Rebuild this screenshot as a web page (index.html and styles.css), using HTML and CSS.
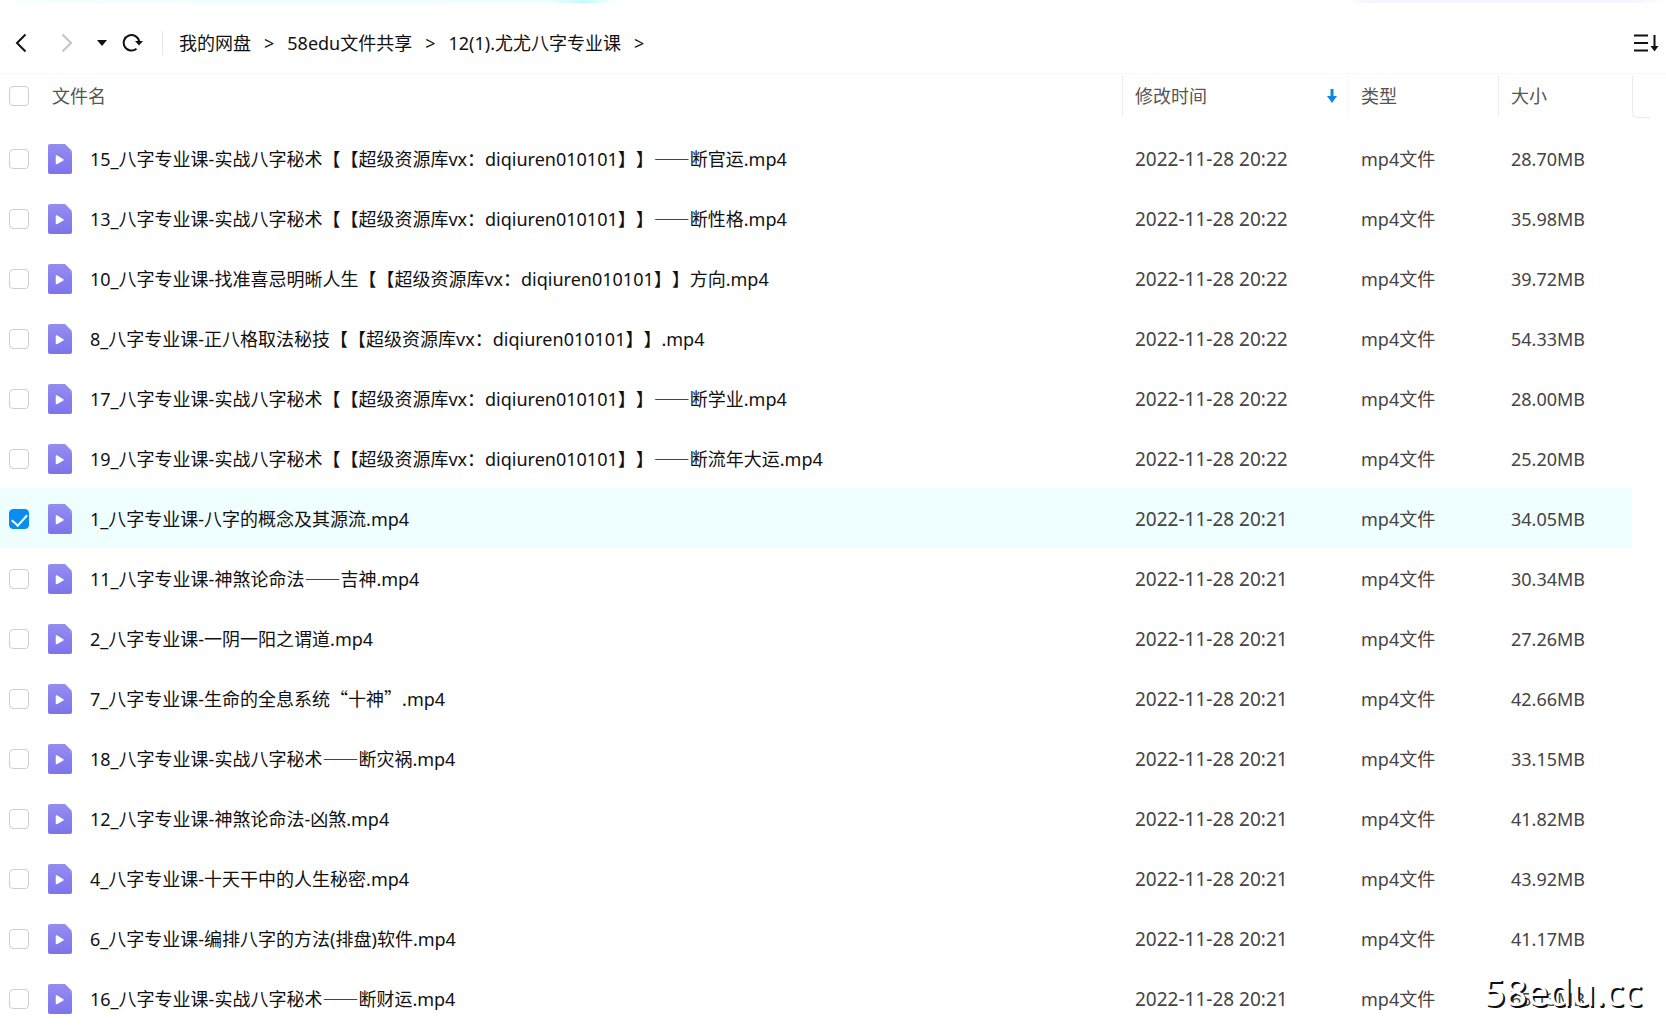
FILE: index.html
```html
<!DOCTYPE html>
<html lang="zh-CN">
<head>
<meta charset="utf-8">
<title>我的网盘</title>
<link rel="stylesheet" href="styles.css">
</head>
<body>
<svg class="defs" width="0" height="0" aria-hidden="true">
  <defs>
    <linearGradient id="fileFill" x1="0" y1="0" x2="0" y2="1">
      <stop offset="0" stop-color="#958cf0"/>
      <stop offset="1" stop-color="#7c74ec"/>
    </linearGradient>
    <symbol id="video" viewBox="0 0 24 30">
      <path d="M2 0H17L24 7V28a2 2 0 0 1-2 2H2a2 2 0 0 1-2-2V2a2 2 0 0 1 2-2z" fill="url(#fileFill)"/>
      <path d="M17 0L24 7V10Q22 4 17 0z" fill="#b9b1f8"/>
      <path d="M8.500 12V19.500L15 15.800z" fill="#fff" stroke="#fff" stroke-width="1.500" stroke-linejoin="round"/>
    </symbol>
  </defs>
</svg>
<div class="strip"></div>
<header class="toolbar">
  <button class="tool back" aria-label="后退"><svg width="12" height="20" viewBox="0 0 12 20"><path d="M10.500 1.500L2 10l8.500 8.500" fill="none" stroke="#111" stroke-width="2"/></svg></button>
  <button class="tool forward" aria-label="前进" disabled><svg width="12" height="20" viewBox="0 0 12 20"><path d="M1.500 1.500L10 10l-8.500 8.500" fill="none" stroke="#c4c4c4" stroke-width="2"/></svg></button>
  <button class="tool recent" aria-label="历史"><svg width="10" height="6" viewBox="0 0 10 6"><path d="M0 0H10L5 6z" fill="#111"/></svg></button>
  <button class="tool" aria-label="刷新"><svg width="22" height="20" viewBox="0 0 22 20"><path d="M14.500 15.800A7.800 7.800 0 1 1 17.200 8.500" fill="none" stroke="#111" stroke-width="2"/><path d="M13 8H21L17 12.500z" fill="#111"/></svg></button>
  <nav class="crumbs" aria-label="路径">
    <a href="#">我的网盘</a><span>&gt;</span><a href="#">58edu文件共享</a><span>&gt;</span><a href="#">12(1).尤尤八字专业课</a><span>&gt;</span>
  </nav>
  <button class="tool sort" aria-label="排序"><svg width="26" height="20" viewBox="0 0 26 20"><path d="M1 2.500H15M1 10H15M1 17.500H15M21.500 2V16" fill="none" stroke="#111" stroke-width="2"/><path d="M17.500 13H25.500L21.500 18.500z" fill="#111"/></svg></button>
</header>
<main>
<table class="files">
  <colgroup><col class="c-check"><col><col class="c-date"><col class="c-type"><col class="c-size"><col class="c-end"></colgroup>
  <thead>
    <tr>
      <th><div class="head"><input type="checkbox" aria-label="全选"></div></th>
      <th><div class="head name">文件名</div></th>
      <th><div class="head line">修改时间<svg class="arrow" width="12" height="16" viewBox="0 0 12 16"><path d="M6 1V10" stroke="#0b86e8" stroke-width="3"/><path d="M1 8H11L6 15z" fill="#0b86e8"/></svg></div></th>
      <th><div class="head line faint">类型</div></th>
      <th><div class="head line">大小</div></th>
      <th><div class="head end"></div></th>
    </tr>
  </thead>
  <tbody id="rows"></tbody>
</table>
</main>
<div class="mark">58edu.cc</div>
<script src="files.js"></script>
</body>
</html>
```
FILE: styles.css
```css
* { box-sizing: border-box; }
body {
  margin: 0;
  background: #fff;
  color: #111;
  font: 18px/24px "Noto Sans", "Noto Sans CJK SC", sans-serif;
  text-spacing-trim: space-all;
}
.defs { position: absolute; }
.strip {
  height: 3px;
  background: linear-gradient(90deg, #fff, #f3fefe 2%, #effefe 33%, #c4fafa 35%, #fcfffc 37%, #fdfffc 81%, #f5f5fb 82%, #f5f5fb 98%, #fff);
}
.toolbar {
  display: flex;
  align-items: center;
  height: 71px;
  padding: 10px 7px 0 15px;
  border-bottom: 1px solid #f8f8f8;
}
.tool { display: flex; padding: 0; border: 0; background: none; }
.forward { margin-left: 34px; }
.recent { margin-left: 24px; }
.recent + .tool { margin-left: 15px; }
.crumbs {
  display: flex;
  align-items: center;
  gap: 13px;
  margin-left: 18px;
  padding-left: 16px;
  border-left: 1px solid #e6e6e6;
}
.crumbs a { color: inherit; text-decoration: none; }
.sort { margin-left: auto; }
.files { width: 100%; table-layout: fixed; border-collapse: collapse; }
.c-check { width: 48px; }
.c-date { width: 226px; }
.c-type { width: 150px; }
.c-size { width: 134px; }
.c-end { width: 34px; }
th { height: 54px; padding: 2px 0 0; vertical-align: top; font-weight: 400; text-align: left; color: #555; }
.head { display: flex; align-items: center; height: 40px; }
.head input, td input { margin: 0 0 0 9px; }
.name { padding-left: 4px; }
.line { padding-left: 12px; border-left: 1px solid #ebebeb; }
.faint { border-left-color: #f8f8f8; }
.arrow { margin: 0 10px 0 auto; }
.end { height: 42px; width: 18px; border: solid #ebebeb; border-width: 0 0 1px 1px; border-radius: 0 0 0 5px; }
input[type="checkbox"] {
  display: block;
  width: 20px;
  height: 20px;
  appearance: none;
  border: 1px solid #cfcfcf;
  border-radius: 4px;
  background: #fff;
}
input[type="checkbox"]:checked {
  border-color: #0a8cf0;
  background: #0a8cf0;
}
input[type="checkbox"]:checked::after {
  content: "";
  display: block;
  width: 7px;
  height: 13px;
  margin: 1px 0 0 5px;
  border: solid #fff;
  border-width: 0 2px 2px 0;
  transform: rotate(42deg);
}
td { height: 60px; padding: 2px 0 0 13px; color: #444; white-space: nowrap; }
td:first-child, td:nth-child(2) { padding-left: 0; }
.date { font-size: 19px; }
.selected td:not(:last-child) { background: #effefe; }
.file { display: flex; align-items: center; gap: 18px; color: #111; }
.file svg { flex: none; }
.full { font-family: "Noto Sans CJK SC", sans-serif; line-height: 1; }
.mark {
  position: absolute;
  right: 24px;
  top: 966px;
  color: #fff;
  font: 38px/50px "Noto Sans", sans-serif;
  text-shadow: 2px 2px 0 #111;
}
```
FILE: files.js
```js
const files = [
  ["15_八字专业课-实战八字秘术【【超级资源库vx：diqiuren010101】】——断官运.mp4", "20:22", "28.70MB"],
  ["13_八字专业课-实战八字秘术【【超级资源库vx：diqiuren010101】】——断性格.mp4", "20:22", "35.98MB"],
  ["10_八字专业课-找准喜忌明晰人生【【超级资源库vx：diqiuren010101】】方向.mp4", "20:22", "39.72MB"],
  ["8_八字专业课-正八格取法秘技【【超级资源库vx：diqiuren010101】】.mp4", "20:22", "54.33MB"],
  ["17_八字专业课-实战八字秘术【【超级资源库vx：diqiuren010101】】——断学业.mp4", "20:22", "28.00MB"],
  ["19_八字专业课-实战八字秘术【【超级资源库vx：diqiuren010101】】——断流年大运.mp4", "20:22", "25.20MB"],
  ["1_八字专业课-八字的概念及其源流.mp4", "20:21", "34.05MB", true],
  ["11_八字专业课-神煞论命法——吉神.mp4", "20:21", "30.34MB"],
  ["2_八字专业课-一阴一阳之谓道.mp4", "20:21", "27.26MB"],
  ["7_八字专业课-生命的全息系统“十神”.mp4", "20:21", "42.66MB"],
  ["18_八字专业课-实战八字秘术——断灾祸.mp4", "20:21", "33.15MB"],
  ["12_八字专业课-神煞论命法-凶煞.mp4", "20:21", "41.82MB"],
  ["4_八字专业课-十天干中的人生秘密.mp4", "20:21", "43.92MB"],
  ["6_八字专业课-编排八字的方法(排盘)软件.mp4", "20:21", "41.17MB"],
  ["16_八字专业课-实战八字秘术——断财运.mp4", "20:21", "65.13MB"]
];

// Dashes and quotes take their full-width form from the Chinese font.
const fullWidth = (name) => name.replace(/——|[“”]/g, '<span class="full">$&</span>');

document.getElementById("rows").innerHTML = files.map(([name, time, size, on], i) => `
  <tr${on ? ' class="selected"' : ""}>
    <td><input type="checkbox" id="f${i}"${on ? " checked" : ""}></td>
    <td><label class="file" for="f${i}"><svg width="24" height="30"><use href="#video"/></svg><span>${fullWidth(name)}</span></label></td>
    <td class="date">2022-11-28 ${time}</td>
    <td>mp4文件</td>
    <td>${size}</td>
    <td></td>
  </tr>`).join("");
```
